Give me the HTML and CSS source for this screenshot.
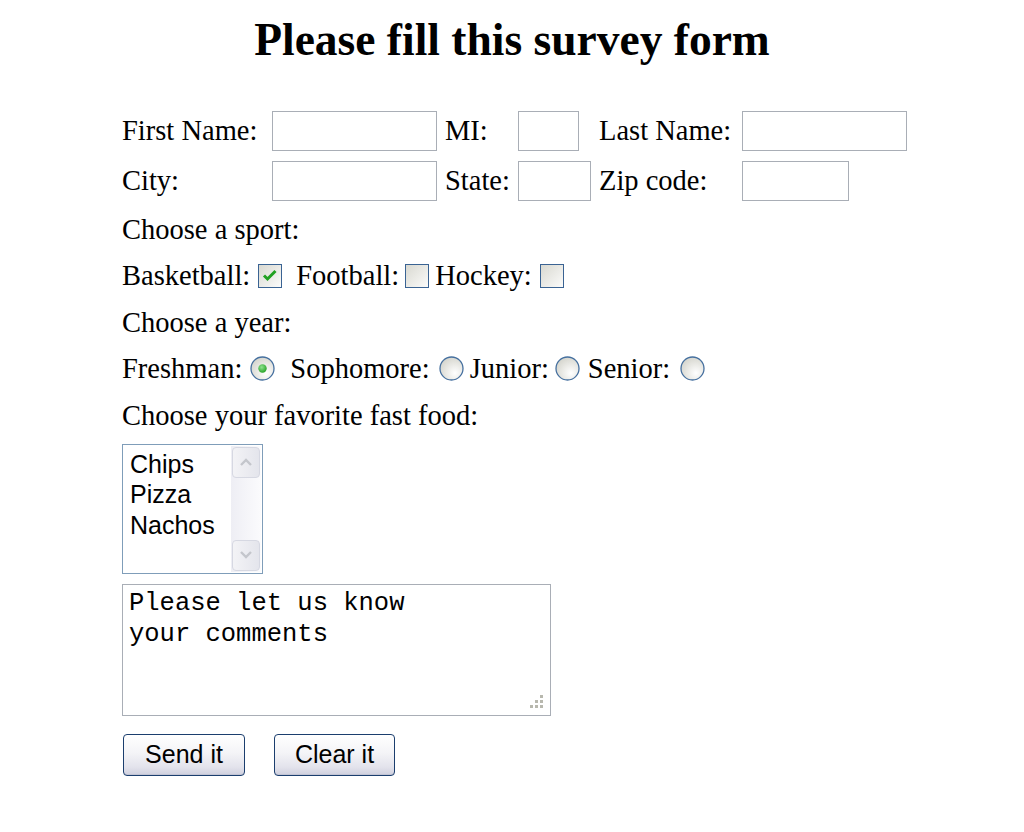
FILE: index.html
```html
<!DOCTYPE html>
<html>
<head>
<meta charset="utf-8">
<title>Survey form</title>
<link rel="stylesheet" href="styles.css">
</head>
<body>
<h1 class="title">Please fill this survey form</h1>
<form class="survey">
  <div class="name-grid">
    <span class="lbl">First Name:</span>
    <span class="cell"><input class="field w-long" type="text"></span>
    <span class="lbl">MI:</span>
    <span class="cell"><input class="field w-mi" type="text"></span>
    <span class="lbl">Last Name:</span>
    <span class="cell"><input class="field w-long" type="text"></span>

    <span class="lbl">City:</span>
    <span class="cell"><input class="field w-long" type="text"></span>
    <span class="lbl">State:</span>
    <span class="cell"><input class="field w-state" type="text"></span>
    <span class="lbl">Zip code:</span>
    <span class="cell"><input class="field w-zip" type="text"></span>
  </div>

  <div class="line">Choose a sport:</div>
  <div class="line opts">
    <span>Basketball:</span>
    <svg class="box gap-l8 gap-r14" width="24" height="24" viewBox="0 0 24 24">
      <defs>
        <linearGradient id="boxfill" x1="0" y1="0" x2="1" y2="1">
          <stop offset="0" stop-color="#d8d8d0"/>
          <stop offset="1" stop-color="#fcfcfb"/>
        </linearGradient>
        <radialGradient id="radfill" cx="0.65" cy="0.7" r="0.75">
          <stop offset="0" stop-color="#ffffff"/>
          <stop offset="1" stop-color="#d4d4cc"/>
        </radialGradient>
        <radialGradient id="dotfill" cx="0.4" cy="0.35" r="0.7">
          <stop offset="0" stop-color="#8fe38f"/>
          <stop offset="1" stop-color="#22a022"/>
        </radialGradient>
      </defs>
      <rect x="0.5" y="0.5" width="23" height="23" fill="url(#boxfill)" stroke="#3a6393"/>
      <path d="M6 11.5 L9.5 15 L17.5 7" fill="none" stroke="#21a121" stroke-width="3"/>
    </svg>
    <span>Football:</span>
    <svg class="box gap-l6 gap-r6" width="24" height="24" viewBox="0 0 24 24">
      <rect x="0.5" y="0.5" width="23" height="23" fill="url(#boxfill)" stroke="#3a6393"/>
    </svg>
    <span>Hockey:</span>
    <svg class="box gap-l8" width="24" height="24" viewBox="0 0 24 24">
      <rect x="0.5" y="0.5" width="23" height="23" fill="url(#boxfill)" stroke="#3a6393"/>
    </svg>
  </div>

  <div class="line">Choose a year:</div>
  <div class="line opts">
    <span>Freshman:</span>
    <svg class="radio gap-l8 gap-r15" width="25" height="25" viewBox="0 0 25 25">
      <circle cx="12.5" cy="12.5" r="11.5" fill="url(#radfill)" stroke="#46709f" stroke-width="1.3"/>
      <circle cx="12.5" cy="12.5" r="4.2" fill="url(#dotfill)"/>
    </svg>
    <span>Sophomore:</span>
    <svg class="radio gap-l9 gap-r6" width="25" height="25" viewBox="0 0 25 25">
      <circle cx="12.5" cy="12.5" r="11.5" fill="url(#radfill)" stroke="#46709f" stroke-width="1.3"/>
    </svg>
    <span>Junior:</span>
    <svg class="radio gap-l6 gap-r8" width="25" height="25" viewBox="0 0 25 25">
      <circle cx="12.5" cy="12.5" r="11.5" fill="url(#radfill)" stroke="#46709f" stroke-width="1.3"/>
    </svg>
    <span>Senior:</span>
    <svg class="radio gap-l10" width="25" height="25" viewBox="0 0 25 25">
      <circle cx="12.5" cy="12.5" r="11.5" fill="url(#radfill)" stroke="#46709f" stroke-width="1.3"/>
    </svg>
  </div>

  <div class="line">Choose your favorite fast food:</div>

  <div class="listbox">
    <div class="options">
      <div class="opt">Chips</div>
      <div class="opt">Pizza</div>
      <div class="opt">Nachos</div>
    </div>
    <div class="scrollbar">
      <div class="sbtn">
        <svg width="14" height="10" viewBox="0 0 14 10"><path d="M2 8 L7 3 L12 8" fill="none" stroke="#c4c6cc" stroke-width="2.4"/></svg>
      </div>
      <div class="track"></div>
      <div class="sbtn">
        <svg width="14" height="10" viewBox="0 0 14 10"><path d="M2 2 L7 7 L12 2" fill="none" stroke="#c4c6cc" stroke-width="2.4"/></svg>
      </div>
    </div>
  </div>

  <div class="comments">
    <textarea class="textarea">Please let us know
your comments</textarea>
    <svg class="grip" width="14" height="14" viewBox="0 0 14 14">
      <rect x="10" y="0" width="3" height="3" fill="#b8b8ae"/>
      <rect x="5" y="5" width="3" height="3" fill="#b8b8ae"/>
      <rect x="10" y="5" width="3" height="3" fill="#b8b8ae"/>
      <rect x="0" y="10" width="3" height="3" fill="#b8b8ae"/>
      <rect x="5" y="10" width="3" height="3" fill="#b8b8ae"/>
      <rect x="10" y="10" width="3" height="3" fill="#b8b8ae"/>
    </svg>
  </div>

  <div class="buttons">
    <button type="submit" class="btn btn-send">Send it</button>
    <button type="reset" class="btn btn-clear">Clear it</button>
  </div>
</form>
</body>
</html>
```

FILE: styles.css
```css
html, body {
  margin: 0;
  padding: 0;
  background: #ffffff;
}

body {
  font-family: "Liberation Serif", "Times New Roman", serif;
  font-size: 28.5px;
  color: #000000;
}

.title {
  margin: 0;
  padding-top: 12px;
  height: 94px;
  box-sizing: border-box;
  line-height: 56px;
  font-size: 45.5px;
  font-weight: bold;
  text-align: center;
}

.survey {
  padding-left: 122px;
  margin: 0;
}

.name-grid {
  display: grid;
  grid-template-columns: 150px 173px 73px 81px 143px 165px;
  grid-auto-rows: 50px;
  align-items: center;
  padding-top: 12px;
}

.lbl {
  white-space: nowrap;
  line-height: 50px;
}

.cell {
  display: flex;
  align-items: center;
}

.field {
  box-sizing: border-box;
  height: 40px;
  margin: 0;
  padding: 2px 4px;
  border: 1px solid #a9aeb6;
  background: #ffffff;
  font-family: "Liberation Sans", sans-serif;
  font-size: 20px;
  outline: none;
}

.w-long { width: 165px; }
.w-mi { width: 61px; }
.w-state { width: 73px; }
.w-zip { width: 107px; }

.line {
  height: 46.5px;
  line-height: 48px;
  white-space: nowrap;
}

.opts {
  display: flex;
  align-items: center;
}

.box, .radio {
  display: block;
  flex: none;
}

.gap-l6 { margin-left: 6px; }
.gap-l8 { margin-left: 8px; }
.gap-l9 { margin-left: 9px; }
.gap-l10 { margin-left: 10px; }
.gap-r6 { margin-right: 6px; }
.gap-r8 { margin-right: 8px; }
.gap-r14 { margin-right: 14px; }
.gap-r15 { margin-right: 15px; }

.listbox {
  box-sizing: border-box;
  width: 141px;
  height: 130px;
  margin-top: 5px;
  border: 1px solid #7f9db9;
  display: flex;
  background: #ffffff;
}

.options {
  flex: 1;
  padding: 4px 0 0 7px;
  font-family: "Liberation Sans", Arial, sans-serif;
  font-size: 25px;
  line-height: 30.5px;
}

.scrollbar {
  width: 30px;
  margin: 1px 1px 1px 0;
  display: flex;
  flex-direction: column;
  background: linear-gradient(to right, #eeeef4, #fbfbfd);
}

.sbtn {
  box-sizing: border-box;
  height: 31px;
  margin: 1px;
  border: 1px solid #d6d8e2;
  border-radius: 4px;
  background: linear-gradient(to right, #f3f3f6, #e4e5ec);
  display: flex;
  align-items: center;
  justify-content: center;
}

.track {
  flex: 1;
}

.comments {
  position: relative;
  width: 429px;
  height: 132px;
  margin-top: 10px;
}

.textarea {
  box-sizing: border-box;
  display: block;
  width: 429px;
  height: 132px;
  margin: 0;
  padding: 3px 6px;
  border: 1px solid #a9aeb6;
  resize: none;
  overflow: hidden;
  font-family: "Liberation Mono", "Courier New", monospace;
  font-size: 25.5px;
  line-height: 31px;
  color: #000000;
  outline: none;
}

.grip {
  position: absolute;
  right: 7px;
  bottom: 7px;
}

.buttons {
  display: flex;
  margin-top: 18px;
  padding-left: 1px;
}

.btn {
  box-sizing: border-box;
  height: 42px;
  margin: 0;
  padding: 0;
  border: 1px solid #1b3e6e;
  border-radius: 4px;
  background: linear-gradient(to bottom, #ffffff 0%, #f4f4f7 45%, #e3e3ec 80%, #cfd0de 100%);
  box-shadow: inset 0 -1px 0 #c2c4d4;
  font-family: "Liberation Sans", Arial, sans-serif;
  font-size: 25px;
  color: #000000;
}

.btn-send { width: 122px; }
.btn-clear { width: 121px; margin-left: 29px; }
```
